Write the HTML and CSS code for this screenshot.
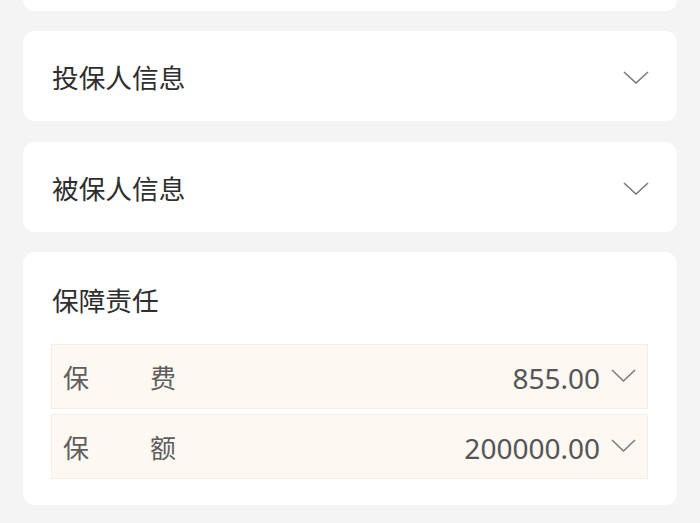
FILE: index.html
```html
<!DOCTYPE html>
<html lang="zh-CN">
<head>
<meta charset="utf-8">
<title>保障信息</title>
<link rel="stylesheet" href="styles.css">
</head>
<body>
<div class="page">
  <div class="card card-cut"></div>

  <div class="card card-collapse">
    <span class="card-title">投保人信息</span>
    <svg class="chev" width="26" height="13" viewBox="0 0 26 13"><polyline points="1,1 13,12 25,1" fill="none" stroke="#7a7a7a" stroke-width="1.6"/></svg>
  </div>

  <div class="card card-collapse">
    <span class="card-title">被保人信息</span>
    <svg class="chev" width="26" height="13" viewBox="0 0 26 13"><polyline points="1,1 13,12 25,1" fill="none" stroke="#7a7a7a" stroke-width="1.6"/></svg>
  </div>

  <div class="card card-detail">
    <div class="card-title detail-title">保障责任</div>
    <div class="rows">
      <div class="row">
        <span class="label"><span>保</span><span>费</span></span>
        <span class="value">855.00</span>
        <svg class="chev-sm" width="25" height="13" viewBox="0 0 25 13"><polyline points="1,1 12.5,12 24,1" fill="none" stroke="#7a7a7a" stroke-width="1.5"/></svg>
      </div>
      <div class="row">
        <span class="label"><span>保</span><span>额</span></span>
        <span class="value">200000.00</span>
        <svg class="chev-sm" width="25" height="13" viewBox="0 0 25 13"><polyline points="1,1 12.5,12 24,1" fill="none" stroke="#7a7a7a" stroke-width="1.5"/></svg>
      </div>
    </div>
  </div>
</div>
</body>
</html>
```

FILE: styles.css
```css
* { box-sizing: border-box; }
html, body {
  margin: 0;
  padding: 0;
  background: #f4f4f4;
}
body {
  font-family: "Noto Sans CJK SC", "Noto Sans", sans-serif;
  width: 700px;
  height: 523px;
  overflow: hidden;
}
.page {
  display: flex;
  flex-direction: column;
  gap: 20px;
  padding: 0 23px;
}
.card {
  background: #ffffff;
  border-radius: 12px;
}
.card-cut {
  height: 11px;
  border-radius: 0 0 12px 12px;
}
.card-collapse {
  height: 90px;
  display: flex;
  align-items: center;
  justify-content: space-between;
  padding: 0 28px 0 29px;
}
.card-collapse + .card-collapse {
  margin-top: 1px;
}
.card-title {
  font-size: 26.7px;
  color: #2e2e2e;
  line-height: 39px;
}
.chev {
  display: block;
  margin-top: 2px;
}
.card-detail {
  padding: 28px 29px 26px 28px;
}
.detail-title {
  padding-left: 1px;
  margin-bottom: 25px;
}
.rows {
  display: flex;
  flex-direction: column;
  gap: 5px;
}
.row {
  height: 65px;
  background: #fdf8f2;
  border: 1px solid #f6eee5;
  display: flex;
  align-items: center;
  padding: 0 11px 0 11px;
}
.label {
  width: 113px;
  display: flex;
  justify-content: space-between;
  font-size: 26px;
  color: #5e5e5e;
  line-height: 36px;
}
.value {
  margin-left: auto;
  font-family: "Noto Sans", "Noto Sans CJK SC", sans-serif;
  font-size: 28px;
  color: #555555;
  line-height: 36px;
  margin-top: 2px;
}
.chev-sm {
  display: block;
  margin-left: 11px;
  margin-top: -2px;
}
```
